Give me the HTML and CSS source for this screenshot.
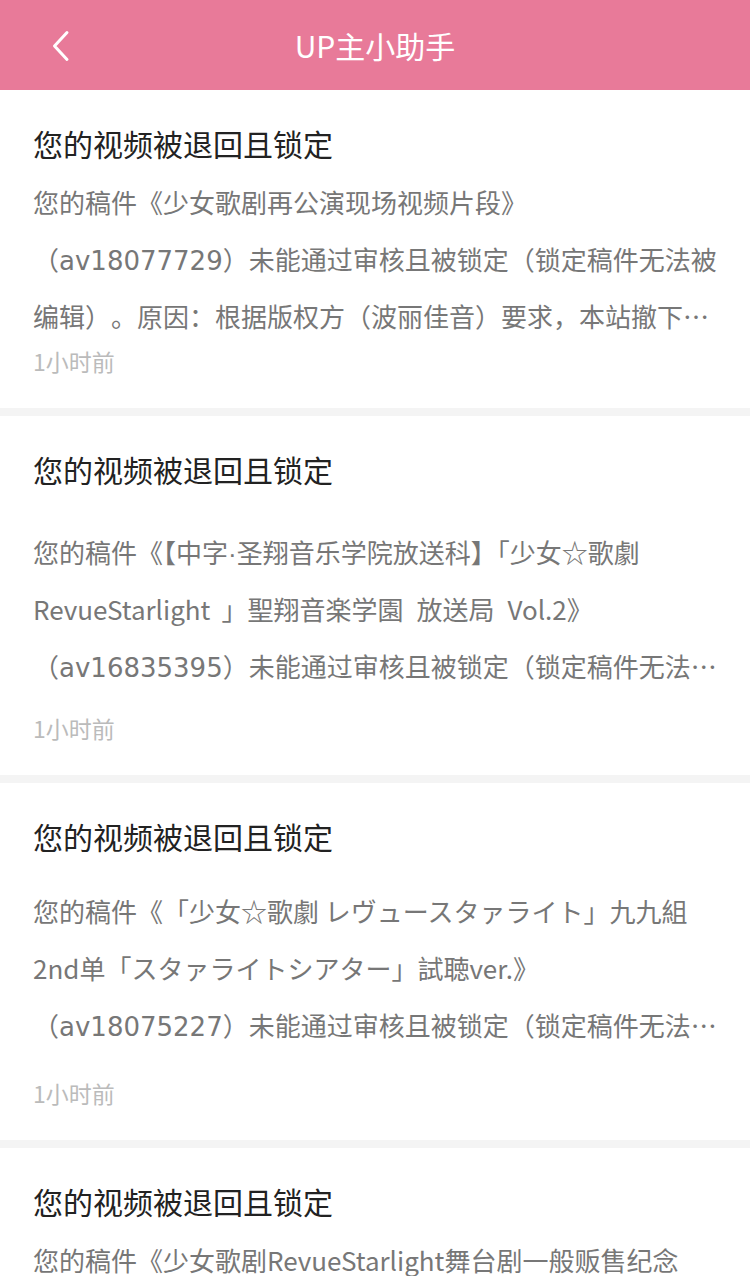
FILE: index.html
```html
<!DOCTYPE html>
<html lang="zh-CN">
<head>
<meta charset="utf-8">
<title>UP主小助手</title>
<link rel="stylesheet" href="styles.css">
</head>
<body>
<header class="topbar">
  <div class="topbar-side">
    <svg class="back-icon" width="18" height="32" viewBox="0 0 18 32" aria-hidden="true">
      <path d="M15 2.5 L2.5 16 L15 29.5" fill="none" stroke="#fff" stroke-width="3" stroke-linecap="round" stroke-linejoin="round"/>
    </svg>
  </div>
  <h1 class="topbar-title">UP主小助手</h1>
  <div class="topbar-side"></div>
</header>

<main class="list">
  <article class="card">
    <h2 class="card-title">您的视频被退回且锁定</h2>
    <p class="card-body">您的稿件《少女歌剧再公演现场视频片段》（<span class="av">av18077729</span>）未能通过审核且被锁定（锁定稿件无法被编辑）。原因：根据版权方（波丽佳音）要求，本站撤下该稿件。</p>
    <div class="card-time">1小时前</div>
  </article>

  <article class="card card--spaced">
    <h2 class="card-title">您的视频被退回且锁定</h2>
    <p class="card-body trimmed">您的稿件《【中字<span class="dot">·</span>圣翔音乐学院放送科】「少女☆歌劇 RevueStarlight &thinsp;」聖翔音楽学園&ensp;放送局&ensp;Vol.2》（<span class="av">av16835395</span>）未能通过审核且被锁定（锁定稿件无法被编辑）。</p>
    <div class="card-time">1小时前</div>
  </article>

  <article class="card card--spaced-alt">
    <h2 class="card-title">您的视频被退回且锁定</h2>
    <p class="card-body">您的稿件《「少女☆歌劇 レヴュースタァライト」九九組 2nd单「スタァライトシアター」試聴ver.》（<span class="av">av18075227</span>）未能通过审核且被锁定（锁定稿件无法被编辑）。</p>
    <div class="card-time">1小时前</div>
  </article>

  <article class="card">
    <h2 class="card-title">您的视频被退回且锁定</h2>
    <p class="card-body">您的稿件《少女歌剧RevueStarlight舞台剧一般贩售纪念Blu-ray》（<span class="av">av18076412</span>）未能通过审核且被锁定（锁定稿件无法被编辑）。</p>
    <div class="card-time">1小时前</div>
  </article>
</main>
</body>
</html>
```

FILE: styles.css
```css
* {
  box-sizing: border-box;
}

html, body {
  margin: 0;
  padding: 0;
}

body {
  width: 750px;
  background: #f4f4f4;
  font-family: "Noto Sans CJK SC", sans-serif;
  text-spacing-trim: space-all;
  overflow: hidden;
}

.topbar {
  height: 90px;
  background: #e87a99;
  display: grid;
  grid-template-columns: 1fr auto 1fr;
  align-items: center;
}

.topbar-side {
  display: flex;
  align-items: center;
}

.back-icon {
  display: block;
  margin-left: 52px;
  margin-top: 2px;
}

.topbar-title {
  margin: 0;
  font-size: 30px;
  font-weight: 400;
  line-height: 40px;
  color: #fff;
}

.list {
  display: flex;
  flex-direction: column;
  gap: 8px;
}

.card {
  background: #fff;
  padding: 33px 32px 32px 33px;
  --body-gap: 10px;
  --time-gap: 2px;
}

.card--spaced {
  --body-gap: 34px;
  --time-gap: 19px;
}

.card--spaced-alt {
  --body-gap: 26px;
  --time-gap: 25px;
}

.card-title {
  margin: 0;
  font-size: 30px;
  font-weight: 400;
  line-height: 40px;
  color: #222;
}

.card-body {
  margin: var(--body-gap) 0 0;
  font-size: 26px;
  line-height: 57px;
  color: #777;
  display: -webkit-box;
  -webkit-box-orient: vertical;
  -webkit-line-clamp: 3;
  overflow: hidden;
}

.card-body.trimmed {
  text-spacing-trim: normal;
}

.av {
  font-family: "DejaVu Sans", sans-serif;
  line-height: 1;
}

.dot {
  font-family: "Liberation Sans", sans-serif;
  line-height: 1;
}

.card-time {
  margin-top: var(--time-gap);
  font-size: 23px;
  line-height: 30px;
  color: #bbb;
}
```
